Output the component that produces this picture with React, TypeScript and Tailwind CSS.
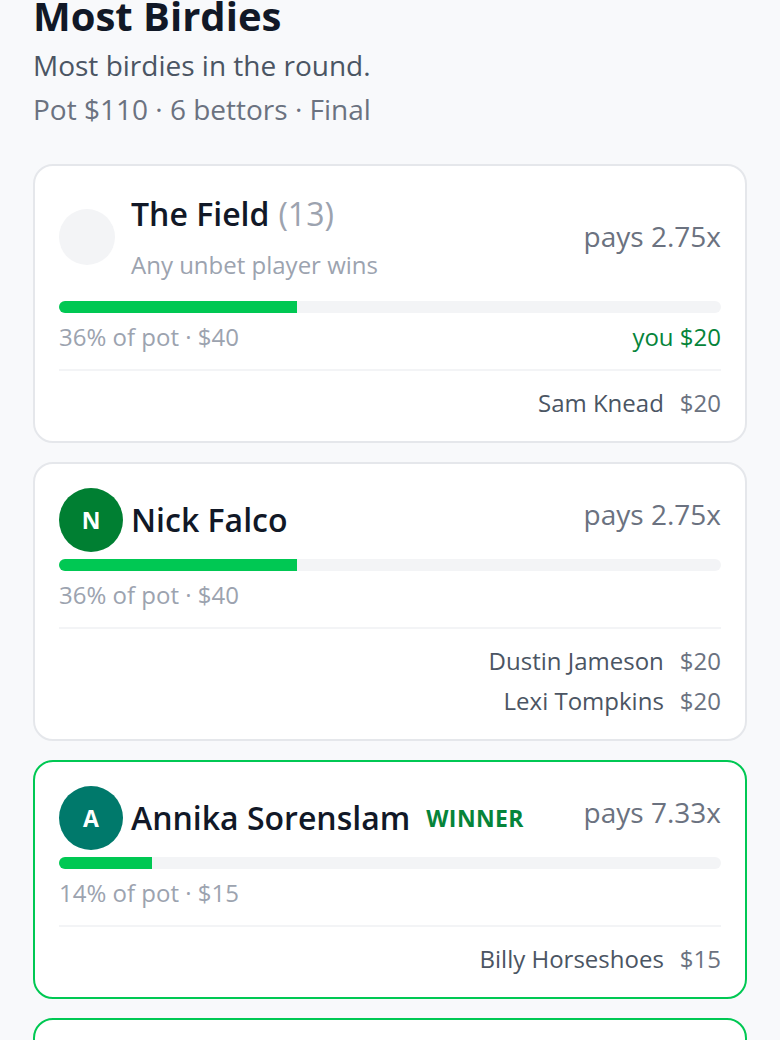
import React from 'react'

type Bettor = { name: string; amount: string }

type Option = {
  id: string
  name: string
  count?: number
  subtitle?: string
  initial?: string
  avatarBg?: string
  winner?: boolean
  pays: string
  pct: number
  potLabel: string
  you?: string
  bettors: Bettor[]
}

const options: Option[] = [
  {
    id: 'field',
    name: 'The Field',
    count: 13,
    subtitle: 'Any unbet player wins',
    pays: '2.75x',
    pct: 36,
    potLabel: '36% of pot · $40',
    you: '$20',
    bettors: [{ name: 'Sam Knead', amount: '$20' }],
  },
  {
    id: 'nick',
    name: 'Nick Falco',
    initial: 'N',
    avatarBg: 'bg-[#007f32]',
    pays: '2.75x',
    pct: 36,
    potLabel: '36% of pot · $40',
    bettors: [
      { name: 'Dustin Jameson', amount: '$20' },
      { name: 'Lexi Tompkins', amount: '$20' },
    ],
  },
  {
    id: 'annika',
    name: 'Annika Sorenslam',
    initial: 'A',
    avatarBg: 'bg-[#00796b]',
    winner: true,
    pays: '7.33x',
    pct: 14,
    potLabel: '14% of pot · $15',
    bettors: [{ name: 'Billy Horseshoes', amount: '$15' }],
  },
  {
    id: 'tommy',
    name: 'Tommy Fleetwood',
    initial: 'T',
    avatarBg: 'bg-[#1565c0]',
    winner: true,
    pays: '3.67x',
    pct: 14,
    potLabel: '14% of pot · $15',
    bettors: [{ name: 'Gus Bramble', amount: '$15' }],
  },
]

function OptionCard({ o }: { o: Option }) {
  const isField = o.id === 'field'
  return (
    <div
      className={`bg-white rounded-[20px] border-2 px-[24px] pt-[24px] pb-[22px] ${
        o.winner ? 'border-[#00c853]' : 'border-[#e5e7eb]'
      }`}
    >
      <div className="flex items-center">
        {isField ? (
          <div className="w-[56px] h-[56px] rounded-full bg-[#f3f4f6] shrink-0" />
        ) : (
          <div
            className={`w-[64px] h-[64px] rounded-full ${o.avatarBg} shrink-0 flex items-center justify-center text-white text-[23px] font-bold`}
          >
            {o.initial}
          </div>
        )}
        <div className={`flex-1 min-w-0 ${isField ? 'ml-[16px] pb-[3px]' : 'ml-[8px]'}`}>
          <div className="flex items-center leading-[48px]">
            <span className="text-[32px] font-semibold text-[#111827]">{o.name}</span>
            {o.count !== undefined && (
              <span className="text-[32px] text-[#9ca3af] ml-[9px]">({o.count})</span>
            )}
            {o.winner && (
              <span className="ml-[16px] text-[23px] font-bold text-[#06843a] tracking-[0.4px]">
                WINNER
              </span>
            )}
          </div>
          {o.subtitle && (
            <div className="mt-[11px] text-[24px] leading-[32px] text-[#9ca3af]">{o.subtitle}</div>
          )}
        </div>
        <div
          className={`text-[28px] leading-[40px] text-[#6b7280] shrink-0 ${
            isField ? '-mt-[3px]' : '-mt-[13px]'
          }`}
        >
          pays {o.pays}
        </div>
      </div>

      <div
        className={`h-[12px] rounded-full bg-[#f3f4f6] overflow-hidden ${
          isField ? 'mt-[17px]' : 'mt-[7px]'
        }`}
      >
        <div className="h-full bg-[#00c853]" style={{ width: `${o.pct}%` }} />
      </div>

      <div className="mt-[8px] flex justify-between text-[24px] leading-[32px]">
        <span className="text-[#9ca3af]">{o.potLabel}</span>
        {o.you && <span className="text-[#06843a]">you {o.you}</span>}
      </div>

      <div className="mt-[16px] border-t-2 border-[#f3f4f6] pt-[16px] flex flex-col gap-[8px]">
        {o.bettors.map((b) => (
          <div key={b.name} className="flex justify-end text-[24px] leading-[32px]">
            <span className="text-[#4b5563]">{b.name}</span>
            <span className="ml-[16px] text-[#6b7280]">{b.amount}</span>
          </div>
        ))}
      </div>
    </div>
  )
}

export default function App() {
  return (
    <div
      className="min-h-screen bg-[#f8f9fb] px-[33px] pb-[40px]"
      style={{ fontFamily: '"Open Sans", "Noto Sans", sans-serif' }}
    >
      <h1 className="text-[40px] leading-[31px] font-bold text-[#111827]">Most Birdies</h1>
      <p className="mt-[14px] text-[28px] leading-[40px] text-[#4b5563]">Most birdies in the round.</p>
      <p className="mt-[4px] text-[28px] leading-[40px] text-[#6b7280]">Pot $110 · 6 bettors · Final</p>

      <div className="mt-[35px] flex flex-col gap-[19px]">
        {options.map((o) => (
          <OptionCard key={o.id} o={o} />
        ))}
      </div>
    </div>
  )
}
